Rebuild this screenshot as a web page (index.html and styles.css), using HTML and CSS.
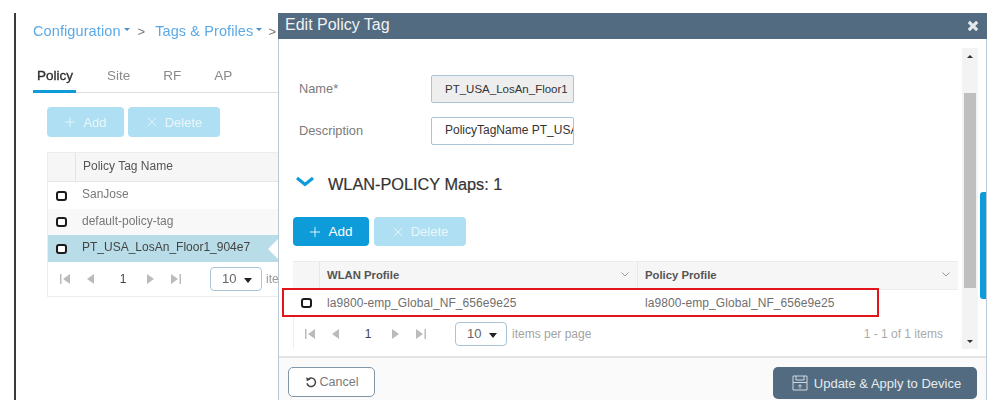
FILE: index.html
```html
<!DOCTYPE html>
<html lang="en">
<head>
<meta charset="utf-8">
<title>Edit Policy Tag</title>
<link rel="stylesheet" href="styles.css">
</head>
<body>
<div class="stage">
  <main class="page">
    <nav class="crumbs">
      <a>Configuration</a><i class="caret"></i><span class="sep">&gt;</span>
      <a>Tags &amp; Profiles</a><i class="caret"></i><span class="sep">&gt;</span>
    </nav>
    <div class="tabs">
      <span class="tab active">Policy</span><span class="tab">Site</span><span class="tab">RF</span><span class="tab">AP</span>
    </div>
    <div class="actions">
      <button class="btn btn-off btn-add"><svg class="ic" viewBox="0 0 14 14"><path d="M7 1v12M1 7h12"/></svg>Add</button>
      <button class="btn btn-off btn-del"><svg class="ic" viewBox="0 0 14 14"><path d="M2 2l10 10M12 2L2 12"/></svg>Delete</button>
    </div>
    <div class="list">
      <div class="list-head"><span class="cell-check"></span><span class="list-title">Policy Tag Name</span></div>
      <div class="list-row"><span class="cell-check"><i class="box"></i></span><span class="row-text">SanJose</span></div>
      <div class="list-row alt"><span class="cell-check"><i class="box"></i></span><span class="row-text">default-policy-tag</span></div>
      <div class="list-row sel"><span class="cell-check"><i class="box"></i></span><span class="row-text">PT_USA_LosAn_Floor1_904e7</span><i class="notch"></i></div>
      <div class="pager pager-left">
        <svg class="pg" viewBox="0 0 12 10"><path d="M1 0h1.500v10H1zM11 0v10L4 5z"/></svg>
        <svg class="pg" viewBox="0 0 12 10"><path d="M9 0v10L2 5z"/></svg>
        <span class="pg-num">1</span>
        <svg class="pg" viewBox="0 0 12 10"><path d="M3 0v10l7-5z"/></svg>
        <svg class="pg" viewBox="0 0 12 10"><path d="M1 0v10l7-5zM9.500 0H11v10H9.500z"/></svg>
        <span class="size">10<i class="size-caret"></i></span>
        <span class="pg-text">items per page</span>
      </div>
    </div>
  </main>

  <section class="modal">
    <header class="modal-head">
      <h1>Edit Policy Tag</h1>
      <svg class="close" viewBox="0 0 10 10"><path d="M1.500 1.500l7 7M8.500 1.500l-7 7"/></svg>
    </header>
    <div class="modal-main">
      <div class="modal-body">
        <div class="field name-field">
          <label>Name*</label>
          <span class="input input-ro">PT_USA_LosAn_Floor1</span>
        </div>
        <div class="field">
          <label>Description</label>
          <span class="input input-desc">PolicyTagName PT_USA</span>
        </div>
        <h2 class="maps">
          <svg class="chev" viewBox="0 0 18 11"><path d="M1 2l8 6.500L17 2"/></svg>
          WLAN-POLICY Maps: 1
        </h2>
        <div class="actions modal-actions">
          <button class="btn btn-on btn-add"><svg class="ic" viewBox="0 0 14 14"><path d="M7 1v12M1 7h12"/></svg>Add</button>
          <button class="btn btn-off btn-del"><svg class="ic" viewBox="0 0 14 14"><path d="M2 2l10 10M12 2L2 12"/></svg>Delete</button>
        </div>
        <div class="grid">
          <div class="grid-head">
            <span class="g-check"></span>
            <span class="g-col g-col1">WLAN Profile<svg class="sort" viewBox="0 0 8 5"><path d="M.5.500L4 4 7.500.500"/></svg></span>
            <span class="g-col g-col2">Policy Profile<svg class="sort" viewBox="0 0 8 5"><path d="M.5.500L4 4 7.500.500"/></svg></span>
          </div>
          <div class="grid-row">
            <span class="g-check"><i class="box"></i></span>
            <span class="g-val g-col1">la9800-emp_Global_NF_656e9e25</span>
            <span class="g-val g-col2">la9800-emp_Global_NF_656e9e25</span>
          </div>
          <div class="pager pager-modal">
            <svg class="pg" viewBox="0 0 12 10"><path d="M1 0h1.500v10H1zM11 0v10L4 5z"/></svg>
            <svg class="pg" viewBox="0 0 12 10"><path d="M9 0v10L2 5z"/></svg>
            <span class="pg-num">1</span>
            <svg class="pg" viewBox="0 0 12 10"><path d="M3 0v10l7-5z"/></svg>
            <svg class="pg" viewBox="0 0 12 10"><path d="M1 0v10l7-5zM9.500 0H11v10H9.500z"/></svg>
            <span class="size">10<i class="size-caret"></i></span>
            <span class="pg-text">items per page</span>
            <span class="pg-count">1 - 1 of 1 items</span>
          </div>
        </div>
      </div>
      <div class="scrollbar">
        <i class="arrow-up"></i>
        <i class="thumb"></i>
        <i class="arrow-down"></i>
      </div>
      <div class="rail"><i class="rail-bar"></i></div>
    </div>
    <footer class="modal-foot">
      <button class="cancel"><svg class="undo" viewBox="0 0 14 14"><path d="M4.200 3.300A5 5 0 1 1 2.300 8.500"/><path class="fill" d="M1.500 1.500l.6 4.700 4.300-2z"/></svg>Cancel</button>
      <button class="apply"><svg class="save" viewBox="0 0 16 16"><path d="M1 1h14v14H1zM4 1v4h8V1M1 7.500h14M8 13.500V10M6.300 11.300L8 9.700l1.700 1.600"/></svg>Update &amp; Apply to Device</button>
    </footer>
    <div class="highlight"></div>
  </section>
</div>
</body>
</html>
```
FILE: styles.css
```css
* { box-sizing: border-box; }
html, body { margin: 0; padding: 0; background: #fff; }
body {
  width: 999px;
  height: 417px;
  overflow: hidden;
  font-family: "Liberation Sans", Arial, sans-serif;
  color: #555;
}
i { display: block; }
button { font-family: inherit; cursor: default; }

.stage {
  position: relative;
  width: 999px;
  height: 417px;
  padding: 13px 0 17px 14px;
  filter: blur(.35px);
}
.page {
  width: 300px;
  height: 387px;
  border-left: 2px solid #3a3a3a;
  padding-left: 17px;
}

/* breadcrumb */
.crumbs {
  display: flex;
  align-items: center;
  height: 36px;
  font-size: 14.500px;
  color: #5ba9e6;
}
.crumbs a { white-space: nowrap; letter-spacing: .1px; }
.caret {
  width: 0;
  height: 0;
  margin: -4px 0 0 3px;
  border: 3px solid transparent;
  border-top-color: #4a8fc9;
  border-bottom: 0;
}
.sep { margin: 0 10px 0 8px; color: #777; font-size: 13px; }
.crumbs .sep:last-child { margin-right: 0; margin-left: 6px; }

/* tabs */
.tabs {
  display: flex;
  width: 245px;
  height: 33px;
  margin-top: 11px;
  border-bottom: 1px solid #dedede;
  font-size: 13.500px;
  color: #8a8a8a;
  line-height: 31px;
}
.tab { padding: 0 3px; margin-right: 27px; height: 33px; }
.tab.active {
  color: #2f2f2f;
  -webkit-text-stroke: .35px #2f2f2f;
  border-bottom: 3px solid #0d9bd9;
  padding: 0 0 0 4px;
  margin-right: 28px;
  width: 43px;
}

/* action buttons */
.actions { display: flex; gap: 4px; margin: 14px 0 0 14px; }
.btn {
  display: flex;
  align-items: center;
  justify-content: center;
  height: 30px;
  padding: 0;
  border: 0;
  border-radius: 4px;
  font-size: 13px;
  color: #fff;
}
.btn-add { width: 77px; }
.btn-del { width: 92px; }
.btn-off { background: #aedff2; color: #e9f7fc; }
.btn-on { background: #0d9bd9; }
.ic { width: 12px; height: 12px; margin-right: 7px; fill: none; stroke: currentColor; stroke-width: 1; }

/* policy tag list */
.list {
  width: 231px;
  margin: 15px 0 0 14px;
  border: 1px solid #ececec;
  border-right: 0;
  font-size: 12px;
  color: #777;
}
.list-head {
  display: flex;
  align-items: center;
  height: 29px;
  padding-bottom: 2px;
  background: #f6f6f6;
  border-bottom: 1px solid #e6e6e6;
}
.cell-check { display: flex; align-items: center; justify-content: center; flex: none; width: 26px; }
.list-head .cell-check { width: 28px; height: 28px; margin-bottom: -2px; border-right: 1px solid #e4e4e4; }
.list-title { color: #555; font-size: 12px; margin-left: 7px; }
.list-row { position: relative; display: flex; align-items: center; height: 27px; gap: 8px; }
.row-text { margin-top: -3px; }
.list-row.alt { background: #f8f8f8; height: 26px; }
.list-row.sel { background: #b9dde8; height: 27px; color: #444; }
.notch {
  position: absolute;
  right: 0;
  top: 4px;
  width: 0;
  height: 0;
  border: 10px solid transparent;
  border-right-color: #fff;
  border-left: 0;
}
.box {
  width: 11px;
  height: 10px;
  border: 2px solid #1b1b1b;
  border-radius: 3px;
  background: #fff;
}

/* pager */
.pager { display: flex; align-items: center; font-size: 12px; color: #999; }
.pager-left { height: 34px; padding-left: 11px; }
.pg { flex: none; width: 12px; height: 10px; margin-right: 14px; fill: #bbb; }
.pg-num { width: 12px; margin: 0 15px 0 6px; color: #444; text-align: center; font-size: 12px; }
.size {
  position: relative;
  flex: none;
  width: 52px;
  height: 24px;
  margin-left: 14px;
  padding-left: 11px;
  line-height: 21px;
  border: 1px solid #a9c4d6;
  border-radius: 4px;
  font-size: 13px;
  color: #666;
}
.size-caret {
  position: absolute;
  right: 9px;
  top: 10px;
  border: 4px solid transparent;
  border-top: 5px solid #222;
  border-bottom: 0;
}
.pg-text { margin-left: 5px; white-space: nowrap; overflow: hidden; }
.pager-left .pg-text { width: 12px; margin-left: 4px; }

/* modal */
.modal {
  position: absolute;
  left: 278px;
  top: 13px;
  width: 709px;
  height: 387px;
  display: flex;
  flex-direction: column;
  background: #fff;
  border-left: 1px solid #b9c9d8;
  border-right: 1px solid #b9c9d8;
}
.modal-head {
  display: flex;
  align-items: center;
  justify-content: space-between;
  flex: none;
  height: 26px;
  margin: 0 -1px;
  padding: 0 8px 0 7px;
  background: #536b80;
  color: #fff;
}
.modal-head h1 { margin: -2px 0 0; font-size: 16px; font-weight: normal; color: #f0f3f5; }
.close { width: 12px; height: 12px; fill: none; stroke: #e6e9ec; stroke-width: 2.600; }

.modal-main { display: flex; flex: 1; min-height: 0; }
.modal-body { width: 683px; flex: none; padding: 36px 0 0 14px; }
.field { display: flex; align-items: center; height: 28px; margin-bottom: 14px; padding-left: 6px; font-size: 12.800px; color: #7b7b7b; }
.field label { width: 132px; flex: none; padding-bottom: 2px; }
.input {
  width: 143px;
  height: 28px;
  padding-left: 13px;
  border: 1px solid #a9c4d6;
  border-radius: 2px;
  line-height: 26px;
  font-size: 11.500px;
  color: #333;
  white-space: nowrap;
  overflow: hidden;
}
.input-ro { background: #eeeeee; }
.input-desc { font-size: 12px; line-height: 25px; }
.maps {
  display: flex;
  align-items: center;
  height: 24px;
  margin: 27px 0 0 3px;
  font-size: 16.300px;
  font-weight: normal;
  color: #333;
  -webkit-text-stroke: .2px #333;
}
.chev { flex: none; width: 18px; height: 11px; margin: -5px 14px 0 0; fill: none; stroke: #0d9bd9; stroke-width: 3.200; }
.modal-actions { margin: 21px 0 0 0; }
.modal-actions .btn { height: 29px; font-size: 13.500px; }
.modal-actions .btn-del { font-size: 13px; }
.modal-actions .btn-add { width: 76px; }
.modal-actions .btn-del { width: 92px; margin-left: 1px; }

.grid { width: 665px; margin-top: 15px; font-size: 11.300px; position: relative; }
.grid-head {
  display: flex;
  height: 29px;
  background: #f6f6f6;
  border: 1px solid #ececec;
  border-width: 1px 0 1px 0;
  color: #555;
  font-weight: bold;
}
.g-check { display: flex; align-items: center; justify-content: center; flex: none; width: 27px; }
.grid-head .g-check { border-right: 1px solid #e8e8e8; }
.g-col1 { width: 318px; flex: none; padding-left: 7px; }
.g-col2 { flex: 1; padding-left: 7px; }
.grid-head .g-col { display: flex; align-items: center; justify-content: space-between; padding-right: 8px; padding-bottom: 2px; }
.grid-head .g-col1 { border-right: 1px solid #e8e8e8; }
.sort { width: 8px; height: 5px; fill: none; stroke: #999; stroke-width: 1; }
.grid-row { display: flex; align-items: center; height: 26px; color: #6f6f6f; }
.g-val { font-size: 12px; letter-spacing: .07px; }
.pager-modal { height: 33px; padding: 2px 0 0 10px; border-left: 1px solid #efefef; }
.pg-count { margin-left: auto; margin-right: 15px; color: #aaa; }
.pager-modal .pg-text { font-size: 12px; color: #a3a3a3; }

.scrollbar {
  position: relative;
  width: 16px;
  flex: none;
  margin-top: 9px;
  margin-bottom: 7px;
  background: #f3f3f3;
  display: flex;
  flex-direction: column;
  align-items: center;
}
.arrow-up { margin-top: 7px; border: 3px solid transparent; border-bottom: 3px solid #333; border-top: 0; }
.arrow-down { margin-top: auto; margin-bottom: 6px; border: 3px solid transparent; border-top: 3px solid #333; border-bottom: 0; }
.thumb { width: 12px; height: 195px; margin-top: 35px; background: #bfbfbf; }
.rail { flex: 1; position: relative; }
.rail-bar { position: absolute; right: 0; top: 153px; width: 6px; height: 107px; border-radius: 3px 0 0 3px; background: #0d9bd9; }

.modal-foot {
  flex: none;
  display: flex;
  align-items: flex-start;
  justify-content: space-between;
  height: 44px;
  padding: 9px 9px 0 9px;
  background: #fafafa;
  border-top: 2px solid #e4e4e4;
}
.cancel {
  display: flex;
  align-items: center;
  justify-content: center;
  width: 87px;
  height: 30px;
  padding: 0;
  background: #fff;
  border: 1px solid #7f97a8;
  border-radius: 5px;
  font-size: 12.500px;
  color: #7b7b7b;
}
.undo { width: 12px; height: 12px; margin-right: 3px; fill: none; stroke: #444; stroke-width: 1.700; }
.undo .fill { fill: #444; stroke: none; }
.apply {
  display: flex;
  align-items: center;
  justify-content: center;
  width: 204px;
  height: 32px;
  padding: 0 0 0 3px;
  background: #536b80;
  border: 0;
  border-radius: 5px;
  font-size: 13px;
  color: #e6ebee;
}
.save { width: 16px; height: 16px; margin-right: 6px; fill: none; stroke: #cfd8de; stroke-width: 1; }

.highlight {
  position: absolute;
  left: 3px;
  top: 275px;
  width: 597px;
  height: 29px;
  border: 2px solid #e3151a;
}
```
